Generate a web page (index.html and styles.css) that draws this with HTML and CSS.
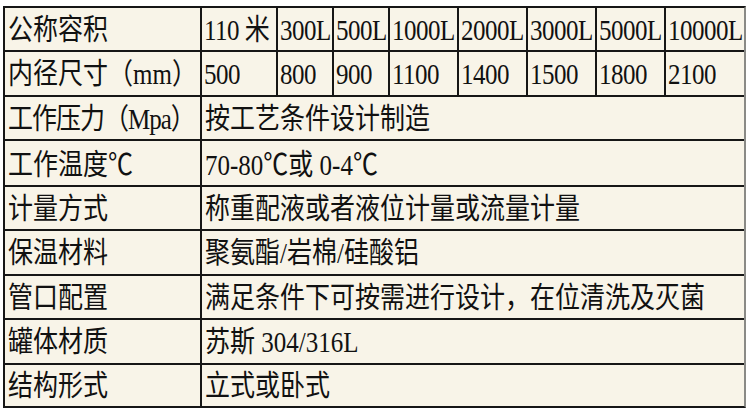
FILE: index.html
```html
<!DOCTYPE html>
<html lang="zh-CN">
<head>
<meta charset="utf-8">
<title>规格参数</title>
<link rel="stylesheet" href="styles.css">
</head>
<body>
<div class="spec">
  <div class="cell"><span class="t">公称容积</span></div>
  <div class="cell num"><span class="t">110 米</span></div>
  <div class="cell num"><span class="t">300L</span></div>
  <div class="cell num"><span class="t">500L</span></div>
  <div class="cell num"><span class="t">1000L</span></div>
  <div class="cell num"><span class="t">2000L</span></div>
  <div class="cell num"><span class="t">3000L</span></div>
  <div class="cell num"><span class="t">5000L</span></div>
  <div class="cell num"><span class="t">10000L</span></div>

  <div class="cell"><span class="t">内径尺寸（mm）</span></div>
  <div class="cell num"><span class="t">500</span></div>
  <div class="cell num"><span class="t">800</span></div>
  <div class="cell num"><span class="t">900</span></div>
  <div class="cell num"><span class="t">1100</span></div>
  <div class="cell num"><span class="t">1400</span></div>
  <div class="cell num"><span class="t">1500</span></div>
  <div class="cell num"><span class="t">1800</span></div>
  <div class="cell num"><span class="t">2100</span></div>

  <div class="cell tight"><span class="t">工作压力（Mpa）</span></div>
  <div class="cell wide"><span class="t">按工艺条件设计制造</span></div>

  <div class="cell"><span class="t">工作温度<span class="cjk">℃</span></span></div>
  <div class="cell wide"><span class="t">70-80<span class="cjk">℃</span>或 0-4<span class="cjk">℃</span></span></div>

  <div class="cell"><span class="t">计量方式</span></div>
  <div class="cell wide"><span class="t">称重配液或者液位计量或流量计量</span></div>

  <div class="cell"><span class="t">保温材料</span></div>
  <div class="cell wide"><span class="t">聚氨酯/岩棉/硅酸铝</span></div>

  <div class="cell"><span class="t">管口配置</span></div>
  <div class="cell wide"><span class="t">满足条件下可按需进行设计，在位清洗及灭菌</span></div>

  <div class="cell"><span class="t">罐体材质</span></div>
  <div class="cell wide"><span class="t">苏斯 304/316L</span></div>

  <div class="cell"><span class="t">结构形式</span></div>
  <div class="cell wide"><span class="t">立式或卧式</span></div>
</div>
</body>
</html>
```

FILE: styles.css
```css
html, body {
  margin: 0;
  padding: 0;
  background: #ffffff;
}

body {
  padding: 6px 0 0 3px;
  font-family: "Liberation Serif", "Noto Sans CJK SC", serif;
  color: #111111;
}

.spec {
  display: grid;
  grid-template-columns: 195px 74px 54px 54px 67px 67px 67px 67px 78px;
  grid-template-rows: 42px 43px 42px 44px 42px 43px 42px 43px 41px;
  gap: 2px;
  width: max-content;
  background: #161616;
  border: 2px solid #161616;
  border-right-color: #8a8a86;
}

.cell {
  background: #f8f4e8;
  display: flex;
  align-items: center;
  padding: 2px 0 0 3px;
  font-size: 25px;
  line-height: 1;
  white-space: nowrap;
  overflow: hidden;
}

.num {
  padding-left: 2px;
  letter-spacing: -0.5px;
}

.tight {
  letter-spacing: -1px;
}

.t {
  display: inline-block;
  transform: scaleY(1.16);
  transform-origin: 50% 55%;
}

.cjk {
  font-family: "Noto Sans CJK SC", sans-serif;
}

.wide {
  grid-column: span 8;
}
```
